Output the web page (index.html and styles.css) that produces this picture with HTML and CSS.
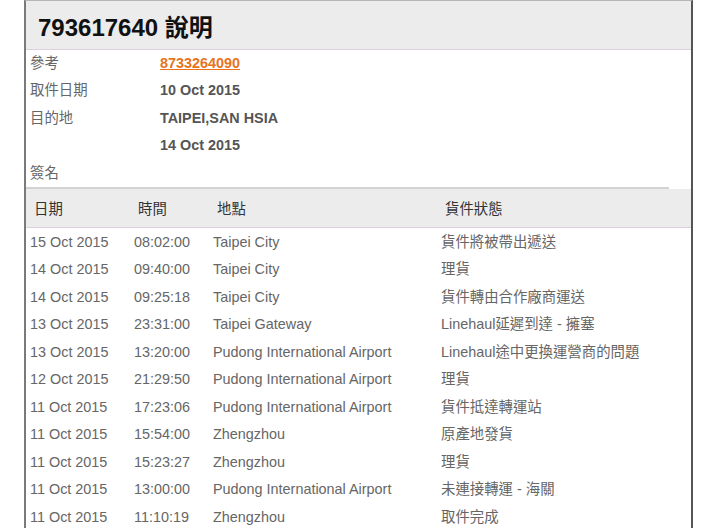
FILE: index.html
```html
<!DOCTYPE html>
<html lang="zh-Hant">
<head>
<meta charset="utf-8">
<link rel="stylesheet" href="styles.css">
</head>
<body>
<div class="panel">
  <div class="panel-head">
    <h1 class="title">793617640 說明</h1>
  </div>
  <div class="info">
    <div class="info-row"><span class="label">參考</span><a class="value link" href="#">8733264090</a></div>
    <div class="info-row"><span class="label">取件日期</span><span class="value">10 Oct 2015</span></div>
    <div class="info-row"><span class="label">目的地</span><span class="value">TAIPEI,SAN HSIA</span></div>
    <div class="info-row"><span class="label"></span><span class="value">14 Oct 2015</span></div>
    <div class="info-row"><span class="label">簽名</span><span class="value"></span></div>
  </div>
  <table class="track">
    <colgroup>
      <col class="c-date"><col class="c-time"><col class="c-loc"><col class="c-status">
    </colgroup>
    <thead>
      <tr><th>日期</th><th>時間</th><th>地點</th><th>貨件狀態</th></tr>
    </thead>
    <tbody>
      <tr><td>15 Oct 2015</td><td>08:02:00</td><td>Taipei City</td><td>貨件將被帶出遞送</td></tr>
      <tr><td>14 Oct 2015</td><td>09:40:00</td><td>Taipei City</td><td>理貨</td></tr>
      <tr><td>14 Oct 2015</td><td>09:25:18</td><td>Taipei City</td><td>貨件轉由合作廠商運送</td></tr>
      <tr><td>13 Oct 2015</td><td>23:31:00</td><td>Taipei Gateway</td><td>Linehaul延遲到達 - 擁塞</td></tr>
      <tr><td>13 Oct 2015</td><td>13:20:00</td><td>Pudong International Airport</td><td>Linehaul途中更換運營商的問題</td></tr>
      <tr><td>12 Oct 2015</td><td>21:29:50</td><td>Pudong International Airport</td><td>理貨</td></tr>
      <tr><td>11 Oct 2015</td><td>17:23:06</td><td>Pudong International Airport</td><td>貨件抵達轉運站</td></tr>
      <tr><td>11 Oct 2015</td><td>15:54:00</td><td>Zhengzhou</td><td>原產地發貨</td></tr>
      <tr><td>11 Oct 2015</td><td>15:23:27</td><td>Zhengzhou</td><td>理貨</td></tr>
      <tr><td>11 Oct 2015</td><td>13:00:00</td><td>Pudong International Airport</td><td>未連接轉運 - 海關</td></tr>
      <tr><td>11 Oct 2015</td><td>11:10:19</td><td>Zhengzhou</td><td>取件完成</td></tr>
    </tbody>
  </table>
</div>
</body>
</html>
```

FILE: styles.css
```css
html, body {
  margin: 0;
  padding: 0;
  background: #fff;
}
body {
  font-family: "Liberation Sans", Arial, "Noto Sans CJK TC", sans-serif;
  font-size: 14.4px;
  color: #666;
  overflow: hidden;
}
.panel {
  margin-left: 24px;
  width: 665px;
  border-left: 2px solid #7a7a7a;
  border-right: 2px solid #555;
  border-top: 1px solid #b5b5b5;
}
.panel-head {
  height: 48px;
  background: #ececec;
  border-bottom: 1px solid #dccfdc;
  display: flex;
  align-items: center;
  padding-left: 12px;
}
.title {
  margin: 0;
  font-size: 24px;
  font-weight: bold;
  color: #111;
}
.info {
  margin-right: 22px;
  border-bottom: 2px solid #d2d2d2;
}
.info-row {
  display: flex;
  height: 27.4px;
  line-height: 27.4px;
  padding-left: 4px;
}
.label {
  width: 130px;
  color: #666;
}
.value {
  font-weight: bold;
  color: #555;
}
.link {
  color: #e8731c;
  text-decoration: underline;
}
.track {
  width: 100%;
  border-collapse: collapse;
  table-layout: fixed;
}
.c-date { width: 104px; }
.c-time { width: 79px; }
.c-loc { width: 228px; }
.track thead tr {
  background: #ececec;
  border-bottom: 1px solid #dccfdc;
}
.track th {
  height: 38px;
  padding: 0 0 0 8px;
  text-align: left;
  font-weight: normal;
  color: #333;
}
.track td {
  height: 27.5px;
  line-height: 16px;
  padding: 0 0 0 4px;
  color: #666;
  white-space: nowrap;
}
```
